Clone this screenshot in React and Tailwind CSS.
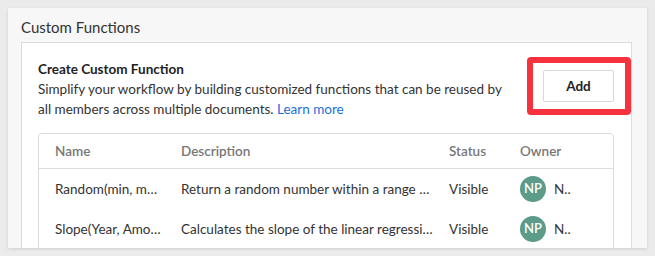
const rows = [
  { name: "Random(min, max)", desc: "Return a random number within a range of values", status: "Visible" },
  { name: "Slope(Year, Amount)", desc: "Calculates the slope of the linear regression line", status: "Visible" },
];

const Avatar = () => (
  <span className="flex items-center justify-center w-[26px] h-[26px] rounded-full bg-[#5c9a89] text-white text-[13px] font-semibold">
    NP
  </span>
);

export default function App() {
  return (
    <div
      className="w-[655px] h-[256px] bg-[#ebebeb] pt-2 pl-2 overflow-hidden text-[#2b2b2b]"
      style={{ fontFamily: "Lato, 'Noto Sans', sans-serif" }}
    >
      <div className="w-[639px] h-[240px] bg-[#f7f7f7] shadow-[0_1px_3px_rgba(0,0,0,0.12)] pt-[7px] pl-[13px] overflow-hidden">
        <h2 className="text-[15px] leading-6 text-[#333]">Custom Functions</h2>
        <div className="relative mt-[3px] w-[611px] h-[300px] bg-white border border-[#dcdcdc] pt-4 pl-4 pr-[17px]">
          <div className="flex justify-between">
            <div className="w-[480px] text-[13.5px] leading-5">
              <p className="font-bold text-[#222]">Create Custom Function</p>
              <p className="text-[#333]">
                Simplify your workflow by building customized functions that can be reused by
                <br />
                all members across multiple documents. <span className="text-[#1a6fdc]">Learn more</span>
              </p>
            </div>
            <button className="mt-[11px] w-[71px] h-[32px] bg-white border border-[#d9d9d9] rounded-[2px] text-[13.5px] font-bold text-[#222]">
              Add
            </button>
          </div>
          <div className="absolute left-[505px] top-[14px] w-[104px] h-[58px] border-[6px] border-[#f7323f] rounded-[4px]" />

          <div className="mt-[14px] w-[576px] border border-[#dcdcdc] rounded-t-[4px] text-[13.5px]">
            <div className="grid grid-cols-[126px_268px_71px_1fr] h-[35px] items-center border-b border-[#dcdcdc] text-[#777] font-semibold">
              <div className="pl-4">Name</div>
              <div className="pl-4">Description</div>
              <div className="pl-4">Status</div>
              <div className="pl-4">Owner</div>
            </div>
            {rows.map((r) => (
              <div key={r.name} className="grid grid-cols-[126px_268px_71px_1fr] h-10 items-center text-[#333]">
                <div className="pl-4 pr-[3px] truncate">{r.name}</div>
                <div className="pl-4 truncate">{r.desc}</div>
                <div className="pl-4 truncate">{r.status}</div>
                <div className="pl-4 flex items-center gap-2">
                  <Avatar />
                  <span>N..</span>
                </div>
              </div>
            ))}
          </div>
        </div>
      </div>
    </div>
  );
}
